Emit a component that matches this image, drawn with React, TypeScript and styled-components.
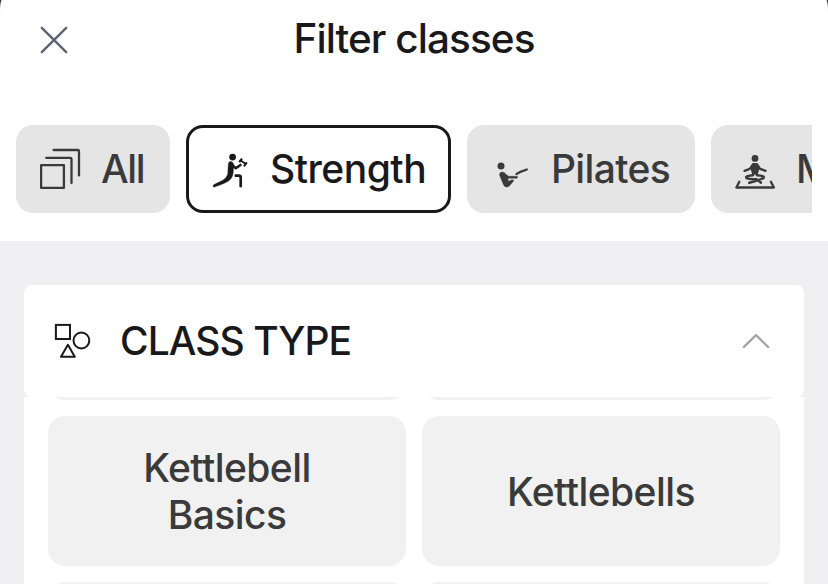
import React from "react";
import styled, { createGlobalStyle } from "styled-components";

const GlobalStyle = createGlobalStyle`
  *, *::before, *::after { box-sizing: border-box; }
  body {
    margin: 0;
    background: #3a3a3c;
    font-family: Inter, "Liberation Sans", sans-serif;
    overflow: hidden;
  }
  button { font: inherit; color: inherit; border: 0; padding: 0; margin: 0; }
  svg { display: block; flex: none; }
`;

const Sheet = styled.main`
  display: flex;
  flex-direction: column;
  width: 828px;
  height: 584px;
  overflow: hidden;
  background: #f0f0f3;
  border-radius: 2px 2px 0 0 / 15px 15px 0 0;
`;

const Top = styled.header`
  flex: none;
  height: 241px;
  background: #fff;
`;

const TitleBar = styled.div`
  display: grid;
  grid-template-columns: 108px 1fr 108px;
  align-items: center;
  height: 80px;
`;

const CloseButton = styled.button`
  display: grid;
  place-items: center;
  height: 80px;
  background: none;
`;

const Title = styled.h1`
  margin: 0;
  text-align: center;
  white-space: nowrap;
  font-size: 40.5px;
  font-weight: 520;
  line-height: 48px;
  letter-spacing: -0.95px;
  color: #19191b;
  padding-bottom: 3px;
`;

const Chips = styled.nav`
  display: flex;
  gap: 16px;
  margin: 45px 16px 0;
  overflow: hidden;
`;

const Chip = styled.button<{ $width: number; $selected?: boolean }>`
  flex: none;
  display: flex;
  align-items: center;
  gap: 20px;
  width: ${(p) => p.$width}px;
  height: 88px;
  padding-left: ${(p) => (p.$selected ? 21 : 24)}px;
  border: ${(p) => (p.$selected ? "3px solid #19191b" : "0")};
  border-radius: 17px;
  background: ${(p) => (p.$selected ? "#fff" : "#e5e5e5")};
  color: ${(p) => (p.$selected ? "#19191b" : "#3a3a3a")};
`;

const ChipLabel = styled.span<{ $tracking: number }>`
  font-size: 39px;
  font-weight: 520;
  line-height: 48px;
  letter-spacing: ${(p) => p.$tracking}px;
  white-space: nowrap;
`;

const Panel = styled.section`
  flex: 1;
  display: flex;
  flex-direction: column;
  min-height: 0;
  margin: 44px 24px 0;
`;

const PanelHeader = styled.div`
  flex: none;
  display: flex;
  align-items: center;
  height: 112px;
  padding: 0 33px 0 30px;
  border-radius: 8px;
  background: #fff;
`;

const PanelTitle = styled.h2`
  flex: 1;
  margin: 0 0 0 28px;
  font-size: 39px;
  font-weight: 520;
  line-height: 48px;
  letter-spacing: -0.95px;
  color: #19191b;
`;

const OptionViewport = styled.div`
  flex: 1;
  min-height: 0;
  overflow: hidden;
  background: #fff;
`;

const OptionGrid = styled.div`
  display: grid;
  grid-template-columns: 1fr 1fr;
  grid-auto-rows: 150px;
  gap: 16px;
  padding: 0 24px;
  margin-top: -147px;
`;

const Option = styled.button`
  display: flex;
  align-items: center;
  justify-content: center;
  padding: 0 70px;
  border-radius: 17px;
  background: #f1f1f1;
  color: #3a3a3a;
  font-size: 39px;
  font-weight: 520;
  line-height: 47px;
  letter-spacing: -0.57px;
  text-align: center;
`;

const CloseIcon = () => (
  <svg width="28" height="28" viewBox="40 26 28 28" fill="none" stroke="#5b6472" strokeWidth="2.4" strokeLinecap="round">
    <path d="M41.8 27.8 66.2 52.2M66.2 27.8 41.8 52.2" />
  </svg>
);

const AllIcon = () => (
  <svg width="41" height="42" viewBox="40 148 41 42" fill="none" stroke="#3a3a3a" strokeWidth="2.3" strokeLinecap="round" strokeLinejoin="round">
    <rect x="41.1" y="165.1" width="22.8" height="22.8" />
    <path d="M46.2 157.8H70.3Q71.5 157.8 71.5 159V183M53.6 150H77.8Q79 150 79 151.2V175.4" />
  </svg>
);

const StrengthIcon = () => (
  <svg width="40" height="40" viewBox="210 149 40 40" fill="none" stroke="#19191b" strokeLinecap="round" strokeLinejoin="round">
    <circle cx="232.6" cy="157.1" r="3.4" fill="#19191b" stroke="none" />
    <path d="M228.3 164.2Q228.4 161.3 231.2 161.5Q233.5 162 233.6 165L233.3 171.5Q233 178 228.5 181Q225 183.3 214.4 187Q213 187.3 213 186Q213 185.2 214 184.6L222.5 180.4Q226.5 178 227.7 174.5Z" fill="#19191b" stroke="#19191b" strokeWidth="0.4" />
    <path d="M231.5 164.2 235.8 168.3 240.5 164.9" strokeWidth="2.5" />
    <path d="M240.8 160.6 245.3 163.8" strokeWidth="1.8" />
    <path d="M239.7 161.5 241.6 159.2M244.4 165.6 246.4 163" strokeWidth="2.1" />
    <path d="M235.8 175.7H238.8Q240.7 175.7 240.7 177.6V186.2" strokeWidth="2.7" />
  </svg>
);

const PilatesIcon = () => (
  <svg width="40" height="40" viewBox="491 149 40 40" fill="none" stroke="#3a3a3a" strokeLinecap="round" strokeLinejoin="round">
    <circle cx="501" cy="166" r="3.5" fill="#3a3a3a" stroke="none" />
    <path d="M499.5 175Q499.5 172 502 171.9Q504.3 171.9 506 174.3L508.6 176.3H517.2Q518 177.3 517 178.3H508L508.4 181.4 511.2 180H513.8Q513.5 181.5 509.5 185.8Q508 187.4 506 187Q504.5 186.8 503.6 184.9Z" fill="#3a3a3a" stroke="#3a3a3a" strokeWidth="0.4" />
    <path d="M516.5 174 521 171.6 526.8 169.5" strokeWidth="2.3" />
  </svg>
);

const MeditationIcon = () => (
  <svg width="41" height="41" viewBox="735 149 41 41" fill="none" stroke="#3a3a3a" strokeLinecap="round" strokeLinejoin="round">
    <circle cx="755" cy="158.4" r="3.4" fill="#3a3a3a" stroke="none" />
    <path d="M752.3 163.2H757.7L759.3 169 757.7 174.8H752.3L750.7 169Z" fill="#3a3a3a" stroke="none" />
    <path d="M744.5 170.8 749.8 168.9 753 164.3H757L760.2 168.9 765.6 170.8" strokeWidth="2.3" />
    <path d="M753 175.2Q745.5 175.8 746.4 177.8Q747.6 179 756.5 179.2L760.8 182.6M757 175.2Q764.5 175.8 763.6 177.8Q762.2 179.2 749.3 182.8" strokeWidth="2.6" />
    <path d="M739.3 181.8 736.4 187.5H773.9L770.9 181.8" strokeWidth="2.3" />
  </svg>
);

const ShapesIcon = () => (
  <svg width="38" height="38" viewBox="54 322 38 38" fill="none" stroke="#19191b" strokeWidth="2">
    <rect x="55.9" y="324.9" width="14.1" height="14.1" />
    <circle cx="81.4" cy="340.5" r="7.9" />
    <path d="M67.9 344.8 61 356.8H74.8Z" strokeLinejoin="round" />
  </svg>
);

const ChevronUpIcon = () => (
  <svg width="30" height="18" viewBox="741 332 30 18" fill="none" stroke="#a5a5a9" strokeWidth="2.3" strokeLinecap="round" strokeLinejoin="round">
    <path d="M743.9 346.9 756 335.2 768.1 346.9" />
  </svg>
);

const options = ["", "", "Kettlebell Basics", "Kettlebells", "", ""];

export default function App() {
  return (
    <>
      <GlobalStyle />
      <Sheet>
        <Top>
          <TitleBar>
            <CloseButton aria-label="Close"><CloseIcon /></CloseButton>
            <Title>Filter classes</Title>
          </TitleBar>
          <Chips>
            <Chip $width={154}><AllIcon /><ChipLabel $tracking={-1.4}>All</ChipLabel></Chip>
            <Chip $width={265} $selected><StrengthIcon /><ChipLabel $tracking={-0.5}>Strength</ChipLabel></Chip>
            <Chip $width={228}><PilatesIcon /><ChipLabel $tracking={-0.65}>Pilates</ChipLabel></Chip>
            <Chip $width={280}><MeditationIcon /><ChipLabel $tracking={-0.6}>Meditation</ChipLabel></Chip>
          </Chips>
        </Top>
        <Panel>
          <PanelHeader>
            <ShapesIcon />
            <PanelTitle>CLASS TYPE</PanelTitle>
            <ChevronUpIcon />
          </PanelHeader>
          <OptionViewport>
            <OptionGrid>
              {options.map((name, i) => <Option key={i}>{name}</Option>)}
            </OptionGrid>
          </OptionViewport>
        </Panel>
      </Sheet>
    </>
  );
}
